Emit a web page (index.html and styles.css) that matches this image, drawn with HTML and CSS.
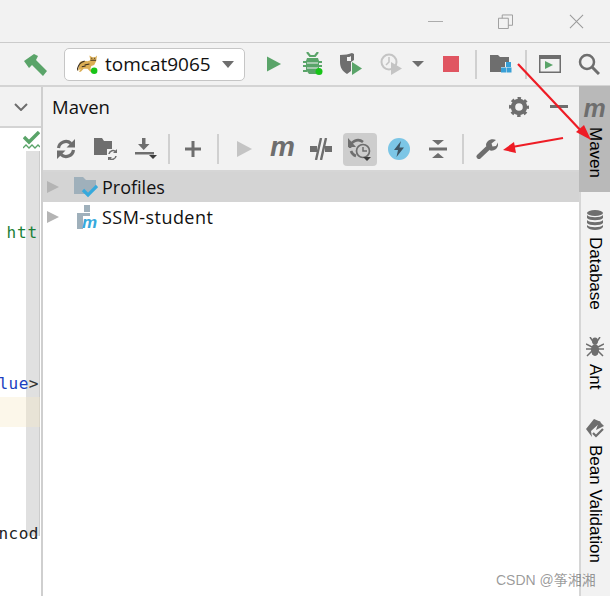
FILE: index.html
```html
<!DOCTYPE html>
<html lang="en">
<head>
<meta charset="utf-8">
<title>Maven tool window</title>
<link rel="stylesheet" href="styles.css">
</head>
<body>
<div class="app">
  <header class="titlebar">
    <svg class="win-btn win-min" viewBox="0 0 16 16"><path d="M0 8h16" stroke="#a6a6a6" stroke-width="1"/></svg>
    <svg class="win-btn win-max" viewBox="0 0 16 16"><path d="M.5 4.5h10.500v11h-10.500zM4.500 4.500v-3.500h11v11h-4.500" fill="none" stroke="#9a9a9a"/></svg>
    <svg class="win-btn win-close" viewBox="0 0 16 16"><path d="M1 1l14 14M15 1l-14 14" stroke="#9a9a9a" stroke-width="1.100"/></svg>
  </header>

  <div class="toolbar">
    <svg class="ic hammer" viewBox="0 0 23 23"><path d="M0 8 10 1l4 2-2 4 11 11-4 5L8 12l-3 3z" fill="#5aa469"/></svg>
    <div class="combo">
      <svg class="cat" viewBox="0 0 22 20"><path d="M3 8c3-2 6-1 8-1l3-1-1-5 3 2 3 0 2-2-1 6-2 4-3 1-1 3 2 3h-2l-3-3H7l-3 3H2l2-3-3 2z" fill="#dcae55"/><path d="M0 17C1 11 3 8 8 7M8 11l5-1M5 13l4-1M14 6h6" stroke="#3e3222" stroke-width="1.100" fill="none"/><path d="M15 4h1M18 4h1" stroke="#222"/><circle cx="18" cy="17" r="3.400" fill="#18c418"/></svg>
      <span class="combo-label">tomcat9065</span>
      <span class="combo-arrow"></span>
    </div>
    <svg class="ic play" viewBox="0 0 16 16"><path d="M0 0 15 8 0 16z" fill="#5aa469"/></svg>
    <svg class="ic bug" viewBox="0 0 20 24"><path d="M4 0l3 4h5l3-4M0 10h4M0 14h4M0 19h4M15 10h4M15 14h4M15 19h4" stroke="#5aa469" stroke-width="2.200" fill="none"/><path d="M4 6h11l1 3v9l-3 4H6l-3-4V9z" fill="#5aa469"/><path d="M4 11h11M4 16h11" stroke="#f2f2f2" stroke-width="1.200"/><circle cx="16" cy="19.500" r="3.500" fill="#18c418"/></svg>
    <svg class="ic shield" viewBox="0 0 22 22"><path d="M0 2c5 0 9-1 12-2l2 1v6l-3 2v9l-4 3C2 18 0 14 0 9z" fill="#6e6e6e"/><path d="M7 4c2 0 3 0 4-1v5H7z" fill="#f2f2f2"/><path d="M12 9l10 6.500L12 22z" fill="#5aa469"/></svg>
    <svg class="ic prof" viewBox="0 0 22 22"><circle cx="9" cy="9" r="7.500" fill="none" stroke="#c4c4c4" stroke-width="2"/><path d="M9 4v5l-3 3" stroke="#c4c4c4" stroke-width="1.500" fill="none"/><path d="M11 9l11 6.500L11 22z" fill="#c4c4c4"/></svg>
    <span class="tri"></span>
    <span class="stop"></span>
    <span class="sep sep-a"></span>
    <svg class="ic proj" viewBox="0 0 22 18"><path d="M0 0h8l2 2h9v5h-4v5h-4v5H0z" fill="#6e6e6e"/><path d="M16 7h5v5h-5zM11 12.500h5v5h-5zM16.500 12.500h5v5h-5z" fill="#389fd6"/></svg>
    <span class="sep sep-b"></span>
    <svg class="ic runwin" viewBox="0 0 22 18"><path d="M.750.750h20.500v16.500H.750z" fill="none" stroke="#6e6e6e" stroke-width="1.500"/><path d="M1 1h20v3H1z" fill="#6e6e6e"/><path d="M6 6l8 4-8 4z" fill="#5aa469"/></svg>
    <svg class="ic search" viewBox="0 0 22 22"><circle cx="9" cy="9" r="7" fill="none" stroke="#6e6e6e" stroke-width="2.500"/><path d="M14 14l7 7" stroke="#6e6e6e" stroke-width="3"/></svg>
  </div>

  <main class="workspace">
    <section class="editor">
      <div class="editor-head">
        <svg class="chev" viewBox="0 0 14 8"><path d="M1 1l6 6 6-6" fill="none" stroke="#6e6e6e" stroke-width="2"/></svg>
      </div>
      <div class="editor-body">
        <div class="check-row">
          <svg class="check" viewBox="0 0 17 19"><path d="M1 6l5 5L16 1" fill="none" stroke="#5aa469" stroke-width="3.400"/><path d="M0 17l3-3 3 3 3-3 3 3 3-3 2 2" fill="none" stroke="#5aa469" stroke-width="1.300"/></svg>
        </div>
        <span class="scroll-track"></span>
        <code class="code code-green">htt</code>
        <code class="code code-blue">lue<span class="code-dark">&gt;</span></code>
        <span class="caret-line"></span>
        <code class="code code-black">ncod</code>
      </div>
    </section>

    <section class="maven">
      <div class="maven-head">
        <h1 class="maven-title">Maven</h1>
        <svg class="gear" viewBox="0 0 20 20"><circle cx="10" cy="10" r="6" fill="none" stroke="#6e6e6e" stroke-width="4.400"/><circle cx="10" cy="10" r="8.600" fill="none" stroke="#6e6e6e" stroke-width="2.800" stroke-dasharray="3.380 3.380" stroke-dashoffset="1.690"/></svg>
        <span class="hide-bar"></span>
      </div>
      <div class="maven-tools">
        <svg class="mi m-refresh" viewBox="0 0 20 20"><path d="M2.500 9a7.500 7.500 0 0 1 12.500-4.500M17.500 11a7.500 7.500 0 0 1-12.500 4.500" fill="none" stroke="#6e6e6e" stroke-width="3.200"/><path d="M19 0v8.500h-8.500zM1 20v-8.500h8.500z" fill="#6e6e6e"/></svg>
        <svg class="mi m-folder" viewBox="0 0 24 22"><path d="M0 0h8l2 3h8v8h-5v6H0z" fill="#6e6e6e"/><path d="M15 16a4 4 0 0 1 7-2M22 18a4 4 0 0 1-7 2" fill="none" stroke="#6e6e6e" stroke-width="1.600"/><path d="M23 11v4h-4zM14 23v-4h4z" fill="#6e6e6e"/></svg>
        <svg class="mi m-down" viewBox="0 0 22 22"><path d="M7 0h3.500v6h4l-5.800 6L3 6h4zM0 14h19v2.500H0z" fill="#6e6e6e"/><path d="M14 17h8l-4 4z" fill="#3c3c3c"/></svg>
        <span class="msep msep-a"></span>
        <svg class="mi m-plus" viewBox="0 0 16 16"><path d="M6.500 0h3v6.500H16v3H9.500V16h-3V9.500H0v-3h6.500z" fill="#6e6e6e"/></svg>
        <span class="msep msep-b"></span>
        <svg class="mi m-play" viewBox="0 0 15 16"><path d="M0 0l15 8-15 8z" fill="#c4c4c4"/></svg>
        <span class="mi m-letter">m</span>
        <svg class="mi m-toggle" viewBox="0 0 22 22"><path d="M0 8h7v6H0zM15 8h7v6h-7z" fill="#6e6e6e"/><path d="M6 22l5-22M11 22l5-22" stroke="#6e6e6e" stroke-width="2.400"/></svg>
        <span class="m-selected">
          <svg class="m-offline" viewBox="0 0 24 24"><path d="M2 11a8 8 0 0 1 13-6" fill="none" stroke="#6e6e6e" stroke-width="2.600"/><path d="M0 1v9h8z" fill="#6e6e6e"/><path d="M3 14a8 8 0 0 0 5 5" fill="none" stroke="#6e6e6e" stroke-width="2.600"/><circle cx="15" cy="14" r="6.500" fill="#cdcdcd" stroke="#6e6e6e" stroke-width="1.700"/><path d="M15 10v4h4" fill="none" stroke="#6e6e6e" stroke-width="1.500"/><path d="M15 20h8l-4 4z" fill="#3c3c3c"/></svg>
        </span>
        <span class="m-bolt"><svg class="bolt" viewBox="0 0 10 16"><path d="M7 0L0 9h4L2.500 16 10 6.500H5.500z" fill="#3f5563"/></svg></span>
        <svg class="mi m-collapse" viewBox="0 0 18 18"><path d="M3 0h12L9 5zM0 7.500h18v3H0zM9 13l6 5H3z" fill="#6e6e6e"/></svg>
        <span class="msep msep-c"></span>
        <svg class="mi m-wrench" viewBox="0 0 22 20"><path d="M3 17.500 12 9" stroke="#6e6e6e" stroke-width="5" stroke-linecap="round"/><path d="M10 6.500C10 2 15 -1 20 1L15.500 4.500l1 3 3.500-.5 2-3.500c1 5-3 9-8 8z" fill="#6e6e6e"/></svg>
      </div>
      <ul class="tree">
        <li class="tree-row tree-row-sel">
          <span class="arrow"></span>
          <svg class="node-ic" viewBox="0 0 24 22"><path d="M0 1h9l3 3h10v6L13 18H0z" fill="#9fb0bb"/><path d="M9 14l5 5 9-9" fill="none" stroke="#36a9dc" stroke-width="3.200"/></svg>
          <span class="tree-label">Profiles</span>
        </li>
        <li class="tree-row">
          <span class="arrow"></span>
          <svg class="node-ic node-mod" viewBox="0 0 25 24"><path d="M8 0h6v7H8zM1 8h13v3H7v13H1z" fill="#9fb0bb"/><text class="node-m" x="6" y="23">m</text></svg>
          <span class="tree-label tree-label-wide">SSM-student</span>
        </li>
      </ul>
    </section>

    <aside class="strip">
      <div class="stripe stripe-active">
        <span class="stripe-m">m</span>
        <span class="stripe-label">Maven</span>
      </div>
      <div class="stripe stripe-db">
        <svg class="stripe-ic" viewBox="0 0 18 20"><ellipse cx="9" cy="3" rx="8" ry="3" fill="#6e6e6e"/><path d="M1 5c2 3 14 3 16 0v3c-2 3-14 3-16 0zM1 10c2 3 14 3 16 0v3c-2 3-14 3-16 0zM1 15c2 3 14 3 16 0v2c-2 4-14 4-16 0z" fill="#6e6e6e"/></svg>
        <span class="stripe-label">Database</span>
      </div>
      <div class="stripe stripe-ant">
        <svg class="stripe-ic" viewBox="0 0 18 20"><ellipse cx="9" cy="4" rx="3" ry="3.500" fill="#6e6e6e"/><ellipse cx="9" cy="13" rx="4" ry="6" fill="#6e6e6e"/><path d="M4 0l4 6 M14 0l-4 6M0 7l6 3M18 7l-6 3M0 12h6M18 12h-6M1 19l5-5M17 19l-5-5" stroke="#6e6e6e" stroke-width="1.500"/></svg>
        <span class="stripe-label">Ant</span>
      </div>
      <div class="stripe stripe-bean">
        <svg class="stripe-ic" viewBox="0 0 18 20"><path d="M8 0l7 3-10 9 1 6-6-8z" fill="#6e6e6e"/><path d="M13 2l5 5-8 4z" fill="#6e6e6e"/><path d="M7 14l3 3 7-7" fill="none" stroke="#6e6e6e" stroke-width="2.200"/></svg>
        <span class="stripe-label">Bean Validation</span>
      </div>
    </aside>
  </main>

  <svg class="arrows" viewBox="0 0 610 596">
    <path d="M518 64 584 134" stroke="#ee1c25" stroke-width="2.200"/>
    <path d="M591 140 576 132 584 125z" fill="#ee1c25"/>
    <path d="M563 138 512 147" stroke="#ee1c25" stroke-width="2.200"/>
    <path d="M503 150 514 142 516 153z" fill="#ee1c25"/>
  </svg>
  <span class="watermark">CSDN @筝湘湘</span>
</div>
</body>
</html>
```

FILE: styles.css
```css
* { box-sizing: border-box; }
html, body { margin: 0; padding: 0; background: #fff; }
.app {
  position: relative;
  width: 610px;
  height: 596px;
  overflow: hidden;
  display: flex;
  flex-direction: column;
  font-family: "Open Sans", "Liberation Sans", sans-serif;
  color: #111;
}
.titlebar {
  height: 43px;
  flex: none;
  background: #f2f2f2;
  border-bottom: 1px solid #cbcbcb;
  display: flex;
  align-items: center;
}
.win-btn { width: 15px; height: 15px; flex: none; }
.win-min { margin-left: 428px; }
.win-max { margin-left: 55px; }
.win-close { margin-left: 56px; }
.toolbar {
  height: 44px;
  flex: none;
  background: #f2f2f2;
  border-bottom: 2px solid #d4d4d4;
  display: flex;
  align-items: center;
  padding-left: 24px;
}
.ic { flex: none; display: block; }
.hammer { width: 23px; height: 23px; }
.combo {
  width: 181px;
  height: 33px;
  margin-left: 17px;
  flex: none;
  background: #fff;
  border: 1px solid #c6c6c6;
  border-radius: 5px;
  display: flex;
  align-items: center;
  padding-left: 12px;
}
.cat { width: 21px; height: 20px; flex: none; }
.combo-label {
  font-size: 19px;
  margin-left: 7px;
  line-height: 26px;
}
.combo-arrow {
  margin-left: 11px;
  border-left: 6.500px solid transparent;
  border-right: 6.500px solid transparent;
  border-top: 7px solid #6e6e6e;
}
.play { width: 15px; height: 16px; margin-left: 22px; }
.bug { width: 20px; height: 24px; margin-left: 21px; }
.shield { width: 22px; height: 22px; margin-left: 17px; }
.prof { width: 22px; height: 22px; margin-left: 18px; }
.tri {
  flex: none;
  margin-left: 10px;
  border-left: 6px solid transparent;
  border-right: 6px solid transparent;
  border-top: 6px solid #6e6e6e;
}
.stop { flex: none; width: 16px; height: 16px; margin-left: 19px; background: #e05561; }
.sep { flex: none; width: 2px; height: 29px; background: #d0d0d0; }
.sep-a { margin-left: 16px; }
.proj { width: 22px; height: 18px; margin-left: 13px; }
.sep-b { margin-left: 13px; }
.runwin { width: 22px; height: 18px; margin-left: 12px; }
.search { width: 22px; height: 22px; margin-left: 17px; }

.workspace { flex: 1; min-height: 0; display: flex; }
.editor {
  width: 41px;
  flex: none;
  display: flex;
  flex-direction: column;
  background: #fff;
}
.editor-head {
  height: 41px;
  flex: none;
  background: #f2f2f2;
  border-bottom: 2px solid #d4d4d4;
  display: flex;
  align-items: center;
  padding-left: 14px;
}
.chev { width: 14px; height: 8px; }
.editor-body { position: relative; flex: 1; }
.check-row { display: flex; justify-content: flex-end; padding: 3px 1px 0 0; }
.check { width: 17px; height: 19px; position: relative; z-index: 2; }
.scroll-track {
  position: absolute;
  left: 26px;
  top: 23px;
  width: 14px;
  height: 385px;
  background: #e0e0e0;
  border-right: 1px solid #cccccc;
}
.caret-line {
  position: absolute;
  left: 0;
  right: 1px;
  top: 269px;
  height: 30px;
  background: rgba(245, 232, 195, 0.35);
}
.code {
  position: absolute;
  right: 2px;
  font-family: "DejaVu Sans Mono", "Liberation Mono", monospace;
  font-size: 16px;
  line-height: 20px;
  letter-spacing: 0.500px;
  white-space: nowrap;
  z-index: 1;
}
.code-green { top: 95px; right: 3px; letter-spacing: 0.900px; color: #1a7f37; }
.code-blue { top: 246px; color: #1a3fc0; }
.code-dark { color: #333; }
.code-black { top: 396px; color: #222; }

.maven {
  flex: 1;
  min-width: 0;
  display: flex;
  flex-direction: column;
  border-left: 2px solid #cfcfcf;
  background: #fff;
}
.maven-head {
  height: 41px;
  flex: none;
  background: #f2f2f2;
  display: flex;
  align-items: center;
  padding-bottom: 2px;
}
.maven-title {
  margin: 0 0 0 9px;
  font-size: 18.500px;
  font-weight: 400;
  line-height: 24px;
  flex: 1;
}
.gear { width: 20px; height: 20px; margin-right: 21px; flex: none; }
.hide-bar { width: 18px; height: 3px; background: #6e6e6e; margin-right: 11px; flex: none; }
.maven-tools {
  height: 44px;
  flex: none;
  background: #f2f2f2;
  border-bottom: 2px solid #d6d6d6;
  display: flex;
  align-items: center;
  padding-left: 13px;
}
.mi { flex: none; display: block; }
.m-refresh { width: 20px; height: 20px; }
.m-folder { width: 24px; height: 22px; margin-left: 18px; }
.m-down { width: 22px; height: 22px; margin-left: 17px; }
.msep { flex: none; width: 2px; height: 30px; background: #d0d0d0; }
.msep-a { margin-left: 11px; }
.m-plus { width: 16px; height: 16px; margin-left: 15px; }
.msep-b { margin-left: 16px; }
.m-play { width: 15px; height: 16px; margin-left: 18px; }
.m-letter {
  margin-left: 18px;
  width: 26px;
  font-family: "Liberation Sans", sans-serif;
  font-size: 28px;
  font-weight: 700;
  font-style: italic;
  line-height: 26px;
  color: #6e6e6e;
  padding-bottom: 5px;
}
.m-toggle { width: 22px; height: 22px; margin-left: 14px; }
.m-selected {
  flex: none;
  width: 34px;
  height: 33px;
  margin-left: 11px;
  background: #cdcdcd;
  border-radius: 4px;
  display: flex;
  align-items: center;
  justify-content: center;
}
.m-offline { width: 24px; height: 24px; }
.m-bolt {
  flex: none;
  width: 22px;
  height: 22px;
  margin-left: 11px;
  border-radius: 50%;
  background: #7cc6e6;
  display: flex;
  align-items: center;
  justify-content: center;
}
.bolt { width: 10px; height: 16px; }
.m-collapse { width: 18px; height: 18px; margin-left: 19px; }
.msep-c { margin-left: 15px; }
.m-wrench { width: 22px; height: 20px; margin-left: 12px; }

.tree { list-style: none; margin: 0; padding: 0; flex: 1; background: #fff; }
.tree-row {
  height: 30px;
  display: flex;
  align-items: center;
  padding-left: 4px;
}
.tree-row-sel { background: #d4d4d4; }
.arrow {
  flex: none;
  border-top: 6.500px solid transparent;
  border-bottom: 6.500px solid transparent;
  border-left: 12px solid #b4b4b4;
}
.node-ic { width: 24px; height: 22px; flex: none; margin-left: 15px; }
.node-mod { width: 25px; height: 24px; margin-left: 17px; }
.node-m {
  font-family: "Liberation Sans", sans-serif;
  font-size: 17px;
  font-weight: 700;
  font-style: italic;
  fill: #36a9dc;
}
.tree-label { margin-left: 4px; font-size: 18px; line-height: 24px; }
.tree-label-wide { margin-left: 1px; letter-spacing: 0.450px; }

.strip {
  width: 31px;
  flex: none;
  background: #f2f2f2;
  box-shadow: inset 2px 0 0 #d6d6d6;
  margin-top: -1px;
  display: flex;
  flex-direction: column;
  align-items: center;
  overflow: hidden;
}
.stripe {
  width: 100%;
  display: flex;
  flex-direction: column;
  align-items: center;
  font-family: "Liberation Sans", sans-serif;
  font-size: 17px;
  flex: none;
}
.stripe-label {
  writing-mode: vertical-rl;
  line-height: 20px;
  white-space: nowrap;
  color: #000;
}
.stripe-active { background: #b9b9b9; height: 106px; padding-top: 10px; }
.stripe-m {
  font-size: 25px;
  font-weight: 700;
  font-style: italic;
  color: #6e6e6e;
  line-height: 25px;
  height: 31px;
}
.stripe-db { padding-top: 18px; }
.stripe-ant { padding-top: 27px; }
.stripe-bean { padding-top: 30px; }
.stripe-ic { width: 18px; height: 20px; margin-bottom: 7px; flex: none; }
.stripe-bean .stripe-ic { margin-bottom: 6px; }

.arrows { position: absolute; inset: 0; width: 610px; height: 596px; pointer-events: none; }
.watermark {
  position: absolute;
  left: 496px;
  top: 570px;
  font-family: "Liberation Sans", "Noto Sans CJK SC", sans-serif;
  font-size: 14px;
  line-height: 20px;
  color: rgba(70, 70, 70, 0.55);
  white-space: nowrap;
}
```
